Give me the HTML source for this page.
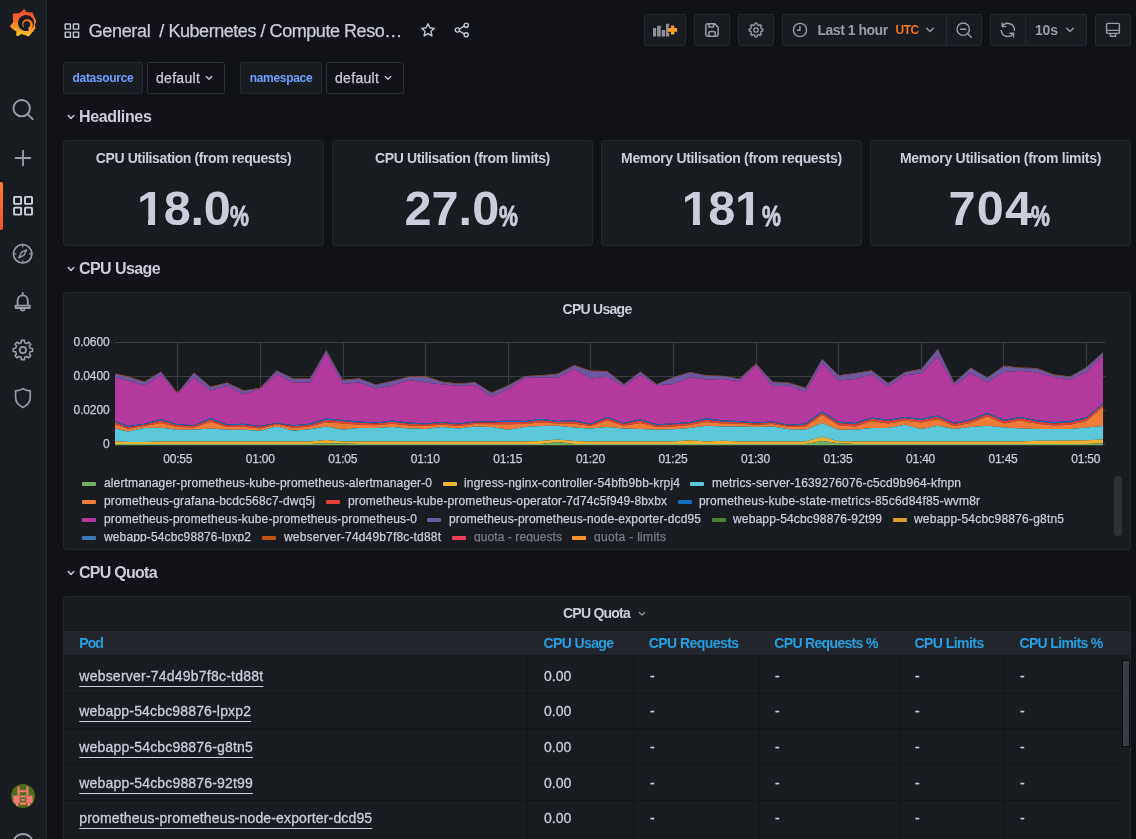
<!DOCTYPE html>
<html lang="en">
<head>
<meta charset="utf-8">
<title>Kubernetes / Compute Resources / Namespace (Pods) - Grafana</title>
<style>
*{box-sizing:border-box;margin:0;padding:0}
html,body{width:1136px;height:839px;overflow:hidden;background:#111217;color:#ccccdc;
  font-family:"Liberation Sans","DejaVu Sans",sans-serif;font-size:14px;-webkit-font-smoothing:antialiased}
.abs{position:absolute}
#side{position:absolute;left:0;top:0;width:47px;height:839px;background:#181b1f;border-right:1px solid #24272c}
#side svg{position:absolute}
.sicon{stroke:#9a9ba6;fill:none;stroke-width:1.9;stroke-linecap:round;stroke-linejoin:round}
#active{position:absolute;left:0;top:182px;width:3px;height:48px;border-radius:0 2px 2px 0;background:linear-gradient(#ff7b30,#f4502e)}
.tbtn{position:absolute;top:14px;height:32px;background:#181b1f;border:1px solid #25282e;border-radius:2px}
.tbtn svg{position:absolute}
.ticon{stroke:#9a9ba6;fill:none;stroke-width:1.7;stroke-linecap:round;stroke-linejoin:round}
.title{-webkit-text-stroke:0.25px #ccccdc;position:absolute;top:20px;font-size:18px;line-height:22px;color:#ccccdc;white-space:nowrap}
.var-label{position:absolute;top:62px;height:32px;background:#181b1f;border:1px solid #25282e;border-radius:2px;color:#6e9fff;font-size:12px;font-weight:700;line-height:30px;text-align:center}
.var-val{-webkit-text-stroke:0.25px #ccccdc;position:absolute;top:62px;height:32px;background:#111217;border:1px solid #2c2f35;border-radius:2px;color:#ccccdc;font-size:14px;line-height:30px;padding-left:8px}
.rowt{position:absolute;left:79px;font-size:16px;font-weight:700;line-height:30px;color:#ccccdc;white-space:nowrap}
.chev{position:absolute;stroke:#ccccdc;fill:none;stroke-width:1.4;stroke-linecap:round;stroke-linejoin:round}
.panel{position:absolute;background:#181b1f;border:1px solid #23262b;border-radius:3px;overflow:hidden}
.ptitle{position:absolute;left:0;right:0;top:1px;height:32px;line-height:32px;text-align:center;font-size:14px;font-weight:700;color:#ccccdc;white-space:nowrap}
.stat{position:absolute;left:0;right:0;top:38px;text-align:center;font-weight:700;color:#ccccdc;white-space:nowrap;line-height:60px}
.sn{position:absolute;top:37.4px;font-size:48.6px;line-height:60px;font-weight:700;color:#ccccdc;white-space:nowrap}
.su{-webkit-text-stroke:0.8px #ccccdc;position:absolute;top:44.5px;font-size:29.5px;line-height:60px;font-weight:700;color:#ccccdc;display:inline-block;transform:scaleX(0.72);transform-origin:0 50%}
.stat .n{font-size:49px;letter-spacing:-0.5px}
.stat .u{font-size:29px;margin-left:1px}
</style>
</head>
<body><div id="root" style="position:absolute;left:0;top:0;width:1136px;height:839px;overflow:hidden;will-change:transform">
<style>
.lg{-webkit-text-stroke:0.25px currentColor;font-size:12px;line-height:17px;color:#ccccdc;white-space:nowrap}
.th{font-size:14px;font-weight:700;line-height:24px;color:#23a0e3;white-space:nowrap}
.td{-webkit-text-stroke:0.3px #ccccdc;font-size:14px;line-height:17px;color:#ccccdc;white-space:nowrap}
.lk{text-decoration:underline;text-underline-offset:4.6px;text-decoration-thickness:1px}
.tr{left:0;width:1058px;height:1.3px;background:#131519}
</style>
<!-- ============ SIDEBAR ============ -->
<div id="side">
  <!-- grafana logo -->
  <svg style="left:9px;top:8px" width="28" height="30" viewBox="0 0 28 30">
    <defs><linearGradient id="gl" gradientUnits="userSpaceOnUse" x1="0" y1="1" x2="0" y2="29"><stop offset="0" stop-color="#f24a2b"/><stop offset="0.3" stop-color="#f3602b"/><stop offset="0.65" stop-color="#f9952a"/><stop offset="1" stop-color="#fbc726"/></linearGradient></defs>
    <path fill="url(#gl)" d="M15.12 0.89 L17.15 3.79 L20.55 4.51 L23.49 4.15 L24.72 7.78 L26.44 10.95 L27.25 13.89 L26.66 14.80 L25.99 16.38 L26.35 20.68 L23.72 22.72 L22.36 25.44 L19.64 28.38 L16.47 27.25 L12.40 26.12 L8.87 28.25 L7.05 27.25 L7.51 23.40 L3.79 21.14 L0.85 18.19 L4.25 14.12 L3.79 9.59 L4.02 5.60 L9.68 5.28 L12.63 3.47Z"/>
    <path fill="#181b1f" d="M24.95 15.70 L24.72 17.08 L24.25 18.38 L23.58 19.56 L22.73 20.59 L21.73 21.46 L20.62 22.14 L19.42 22.63 L18.17 22.92 L16.90 23.00 L15.63 22.88 L14.40 22.56 L13.23 22.05 L12.15 21.36 L11.19 20.49 L10.37 19.47 L9.73 18.31 L9.28 17.04 L9.05 15.70 L9.06 14.32 L9.31 12.94 L9.81 11.61 L10.55 10.37 L11.51 9.28 L12.67 8.37 L13.98 7.69 L15.41 7.26 L16.90 7.10 L18.39 7.22 L19.84 7.62 L21.18 8.28 L22.37 9.18 L23.37 10.27 L24.14 11.52 L24.67 12.87 L24.94 14.28Z"/>
    <path fill="url(#gl)" d="M15.33 18.87 L15.05 18.55 L14.81 18.20 L14.61 17.83 L14.47 17.43 L14.37 17.01 L14.33 16.59 L14.34 16.16 L14.41 15.74 L14.53 15.33 L14.70 14.94 L14.91 14.57 L15.18 14.23 L15.48 13.93 L15.82 13.66 L16.19 13.45 L16.59 13.28 L17.00 13.16 L17.43 13.09 L17.86 13.08 L18.29 13.13 L18.72 13.23 L19.12 13.38 L19.51 13.58 L19.86 13.83 L20.19 14.12 L20.47 14.45 L20.71 14.81 L20.90 15.21 L21.04 15.62 L21.13 16.05 L21.17 16.48 L21.14 16.92 L21.07 17.36 L20.94 17.77 L20.75 18.17 L20.52 18.55 L20.24 18.89 L19.92 19.19 L19.57 19.46 L19.18 19.67 L20.78 24.96 L25.36 22.93 L22.38 20.91 L22.86 20.25 L23.24 19.54 L23.52 18.79 L23.71 18.03 L23.80 17.25 L23.79 16.47 L23.68 15.71 L23.47 14.98 L23.18 14.29 L22.80 13.64 L22.35 13.06 L21.84 12.54 L21.27 12.10 L20.65 11.73 L20.00 11.46 L19.33 11.27 L18.64 11.16 L17.96 11.15 L17.28 11.23 L16.64 11.38 L16.02 11.62 L15.45 11.93 L14.93 12.31 L14.46 12.74 L14.07 13.23 L13.74 13.75 L13.49 14.31 L13.32 14.88 L13.22 15.47 L13.20 16.05 L13.26 16.62 L13.39 17.16 L13.59 17.68 L13.85 18.15 L14.17 18.58 L14.55 18.94 L14.98 19.22Z"/>
  </svg>
  <!-- search -->
  <svg style="left:11px;top:97px" width="24" height="24" viewBox="0 0 24 24"><circle class="sicon" cx="10.7" cy="11.2" r="8.2"/><path class="sicon" d="M16.8 17.4 L21.6 22"/></svg>
  <!-- plus -->
  <svg style="left:11px;top:146px" width="24" height="24" viewBox="0 0 24 24"><path class="sicon" d="M12 4.6 V19.4 M4.6 12 H19.4"/></svg>
  <div id="active"></div>
  <!-- dashboards (active) -->
  <svg style="left:11px;top:194px" width="24" height="24" viewBox="0 0 24 24"><g class="sicon" style="stroke:#d0d1de;stroke-width:1.9"><rect x="3.1" y="2.9" width="7" height="7" rx=".6"/><rect x="14.0" y="2.9" width="7" height="7" rx=".6"/><rect x="3.1" y="13.6" width="7" height="7" rx=".6"/><rect x="14.0" y="13.6" width="7" height="7" rx=".6"/></g></svg>
  <!-- compass -->
  <svg style="left:11px;top:242px" width="24" height="24" viewBox="0 0 24 24"><circle class="sicon" cx="11.7" cy="11.8" r="9.2" style="stroke-width:1.7"/><path class="sicon" style="stroke-width:1.4" d="M15.6 7.8 L13 13.2 L7.8 15.8 L10.4 10.4 Z"/><path class="sicon" style="stroke-width:1.2" d="M11.7 3.6v1.4M11.7 18.6v1.4M3.5 11.8h1.4M18.5 11.8h1.4"/></svg>
  <!-- bell -->
  <svg style="left:11px;top:290px" width="24" height="24" viewBox="0 0 24 24"><path class="sicon" d="M6.6 15.4 V10.8 C6.6 7.8 8.8 5.4 11.7 5.4 C14.6 5.4 16.8 7.8 16.8 10.8 V15.4 M4.6 15.6 H18.8 M4.6 18 H18.8 M4.6 15.6 V18 M18.8 15.6 V18 M9.9 19.6 C10.3 21 13.1 21 13.5 19.6 M11.7 3 V5"/></svg>
  <!-- gear -->
  <svg style="left:11px;top:338px" width="24" height="24" viewBox="-12 -12 24 24"><g transform="translate(-0.1,0)"><path class="sicon" style="stroke-width:1.6" d="M7.3 -1.75 L9.6 -1.55 L9.6 1.55 L7.3 1.75 L6.4 3.95 L7.9 5.7 L5.7 7.9 L3.95 6.4 L1.75 7.3 L1.55 9.6 L-1.55 9.6 L-1.75 7.3 L-3.95 6.4 L-5.7 7.9 L-7.9 5.7 L-6.4 3.95 L-7.3 1.75 L-9.6 1.55 L-9.6 -1.55 L-7.3 -1.75 L-6.4 -3.95 L-7.9 -5.7 L-5.7 -7.9 L-3.95 -6.4 L-1.75 -7.3 L-1.55 -9.6 L1.55 -9.6 L1.75 -7.3 L3.95 -6.4 L5.7 -7.9 L7.9 -5.7 L6.4 -3.95Z"/><circle class="sicon" style="stroke-width:1.7" cx="0" cy="0" r="3.2"/></g></svg>
  <!-- shield -->
  <svg style="left:11px;top:386px" width="24" height="24" viewBox="0 0 24 24"><path class="sicon" style="stroke-width:1.7" d="M11.9 2.6 C9.6 4.4 7 4.8 4.6 4.8 V11.6 C4.6 16.4 8 19.6 11.9 21.4 C15.8 19.6 19.2 16.4 19.2 11.6 V4.8 C16.8 4.8 14.2 4.4 11.9 2.6 Z"/></svg>
  <!-- avatar -->
  <svg style="left:11px;top:784px" width="24" height="24" viewBox="0 0 24 24">
    <defs><clipPath id="avc"><circle cx="12" cy="12" r="12"/></clipPath></defs>
    <g clip-path="url(#avc)"><rect width="24" height="24" fill="#4e6a1c"/>
    <g fill="#ff7a75"><rect x="6.5" y="2.6" width="2.2" height="8.8"/><rect x="15.3" y="2.6" width="2.2" height="8.8"/><rect x="8.7" y="6.2" width="6.6" height="2"/>
    <rect x="2.4" y="11.6" width="6.4" height="7.2"/><rect x="15.2" y="11.6" width="6.4" height="7.2"/><rect x="8.8" y="11.6" width="6.4" height="1.8"/><rect x="10" y="15" width="4" height="1.7"/><rect x="8.8" y="18.4" width="6.4" height="2.4"/><rect x="4.6" y="18.8" width="3" height="3"/><rect x="16.4" y="18.8" width="3" height="3"/><rect x="0" y="2.4" width="2" height="2"/><rect x="22" y="2.4" width="2" height="2"/></g></g>
  </svg>
  <!-- help (cut off) -->
  <svg style="left:11px;top:832px" width="24" height="24" viewBox="0 0 24 24"><circle class="sicon" cx="12" cy="12" r="10"/><circle cx="12" cy="7.6" r="1" fill="#9a9ba6"/></svg>
</div>

<!-- ============ TOP BAR ============ -->
<svg class="abs" style="left:63px;top:22px" width="18" height="18" viewBox="0 0 18 18"><g fill="none" stroke="#c7c8d6" stroke-width="1.45" stroke-linejoin="round"><rect x="2.2" y="1.9" width="5.2" height="5.2" rx=".5"/><rect x="10.4" y="1.9" width="5.2" height="5.2" rx=".5"/><rect x="2.2" y="10.1" width="5.2" height="5.2" rx=".5"/><rect x="10.4" y="10.1" width="5.2" height="5.2" rx=".5"/></g></svg>
<span class="title" id="t1" style="letter-spacing:-0.341px;left:88.7px">General</span><span class="title" id="t2" style="letter-spacing:-0.450px;left:159.3px">/ Kubernetes / Compute Reso…</span>
<!-- star -->
<svg class="abs" style="left:420px;top:22px" width="16" height="16" viewBox="0 0 18 18"><path fill="none" stroke="#c7c8d6" stroke-width="1.55" stroke-linejoin="round" d="M9 1.9 L11.1 6.5 L16 7.1 L12.4 10.5 L13.4 15.5 L9 13 L4.6 15.5 L5.6 10.5 L2 7.1 L6.9 6.5 Z"/></svg>
<!-- share -->
<svg class="abs" style="left:453px;top:21px" width="18" height="18" viewBox="0 0 18 18"><g fill="none" stroke="#c7c8d6" stroke-width="1.4"><circle cx="13.2" cy="4.2" r="2.1"/><circle cx="4.4" cy="9" r="2.1"/><circle cx="13.2" cy="13.8" r="2.1"/><path d="M6.3 8 L11.3 5.2 M6.3 10 L11.3 12.8"/></g></svg>
<!-- toolbar buttons -->
<div class="tbtn" style="left:644px;width:42px">
  <svg style="left:8px;top:6px" width="26" height="18" viewBox="0 0 26 18"><defs><linearGradient id="pg" x1="0" y1="0" x2="0" y2="1"><stop offset="0" stop-color="#f6862c"/><stop offset="1" stop-color="#fbb82a"/></linearGradient></defs><g fill="#8e8f9b"><rect x="-0.1" y="7.1" width="3.2" height="8.5" rx=".4"/><rect x="4.1" y="4.7" width="3.6" height="10.9" rx=".4"/><rect x="8.8" y="9.1" width="3.4" height="6.5" rx=".4"/><rect x="13" y="2.7" width="3.2" height="12.9" rx=".4"/></g><path d="M19.65 4.4 V13.5 M15.1 8.95 H24.2" stroke="#181b1f" stroke-width="5.4"/><path d="M19.65 4.5 V13.4 M15.2 8.95 H24.1" stroke="url(#pg)" stroke-width="3.3"/><rect x="15.2" y="7.3" width="8.9" height="3.3" fill="#f99f2b"/></svg>
</div>
<div class="tbtn" style="left:694px;width:36px">
  <svg style="left:8px;top:6px" width="18" height="18" viewBox="0.8 0.9 16.4 16.4"><path class="ticon" style="stroke-width:1.4" d="M5 3.5 H11.4 L14.6 6.7 V13.3 C14.6 14.1 14 14.7 13.2 14.7 H4.8 C4 14.7 3.4 14.1 3.4 13.3 V5 C3.4 4.1 4.1 3.5 5 3.5 Z M6.2 3.7 V6.3 H10.4 V3.7 M6.2 14.5 V11.5 C6.2 10.9 6.6 10.5 7.2 10.5 H10.9 C11.5 10.5 11.9 10.9 11.9 11.5 V14.5"/></svg>
</div>
<div class="tbtn" style="left:738px;width:36px">
  <svg style="left:8px;top:6px" width="18" height="18" viewBox="-9.55 -9.55 19.1 19.1"><path class="ticon" style="stroke-width:1.4" d="M5.5 -1.3 L7.2 -1.15 L7.2 1.15 L5.5 1.3 L4.8 2.95 L5.9 4.3 L4.3 5.9 L2.95 4.8 L1.3 5.5 L1.15 7.2 L-1.15 7.2 L-1.3 5.5 L-2.95 4.8 L-4.3 5.9 L-5.9 4.3 L-4.8 2.95 L-5.5 1.3 L-7.2 1.15 L-7.2 -1.15 L-5.5 -1.3 L-4.8 -2.95 L-5.9 -4.3 L-4.3 -5.9 L-2.95 -4.8 L-1.3 -5.5 L-1.15 -7.2 L1.15 -7.2 L1.3 -5.5 L2.95 -4.8 L4.3 -5.9 L5.9 -4.3 L4.8 -2.95Z"/><circle class="ticon" style="stroke-width:1.4" cx="0" cy="0" r="2.3"/></svg>
</div>
<div class="tbtn" style="left:782px;width:200px">
  <svg style="left:9px;top:7px" width="16" height="16" viewBox="0 0 16 16"><circle class="ticon" style="stroke-width:1.4" cx="8" cy="8" r="6.6"/><path class="ticon" style="stroke-width:1.4" d="M8 4.4 V8.2 H5.4"/></svg>
  <span class="abs" id="tr" style="letter-spacing:-0.487px;left:34.5px;top:0;line-height:30px;font-size:14px;font-weight:700;color:#9a9ba7;white-space:nowrap">Last 1 hour</span>
  <span class="abs" id="utc" style="letter-spacing:-0.536px;left:112.5px;top:0;line-height:30px;font-size:12px;font-weight:700;color:#f0731e;white-space:nowrap">UTC</span>
  <svg style="left:142px;top:11px" width="10" height="8" viewBox="0 0 10 8"><path class="ticon" style="stroke-width:1.4" d="M1.8 2.2 L5 5.4 L8.2 2.2"/></svg>
  <div class="abs" style="left:163px;top:0;width:1px;height:30px;background:#25282e"></div>
  <svg style="left:172px;top:6px" width="18" height="18" viewBox="0 0 18 18"><circle class="ticon" style="stroke-width:1.4" cx="8.2" cy="8.2" r="6.2"/><path class="ticon" style="stroke-width:1.4" d="M12.8 12.8 L16.2 16.2 M5.6 8.2 H10.8"/></svg>
</div>
<div class="tbtn" style="left:990px;width:97px">
  <svg style="left:8px;top:6px" width="18" height="18" viewBox="0 0 18 18"><path class="ticon" style="stroke-width:1.4" d="M3.4 5.2 A6.6 6.6 0 0 1 15.4 9.3 M3.1 1.9 V5.6 H6.8 M2.2 9.5 A6.6 6.6 0 0 0 14.2 12.6 M14.6 16 V12.3 H10.9"/></svg>
  <div class="abs" style="left:34px;top:0;width:1px;height:30px;background:#25282e"></div>
  <span class="abs" id="ivl" style="letter-spacing:-0.180px;left:44px;top:0;line-height:30px;font-size:14px;font-weight:700;color:#9a9ba7;white-space:nowrap">10s</span>
  <svg style="left:74px;top:11px" width="10" height="8" viewBox="0 0 10 8"><path class="ticon" style="stroke-width:1.4" d="M1.8 2.2 L5 5.4 L8.2 2.2"/></svg>
</div>
<div class="tbtn" style="left:1095px;width:36px">
  <svg style="left:8px;top:6px" width="18" height="18" viewBox="0 0 18 18"><path class="ticon" style="stroke-width:1.4" d="M3.6 2.4 H14.4 C15 2.4 15.4 2.8 15.4 3.4 V11.4 C15.4 12 15 12.4 14.4 12.4 H3.6 C3 12.4 2.6 12 2.6 11.4 V3.4 C2.6 2.8 3 2.4 3.6 2.4 Z M2.8 9.4 H15.2 M6.4 12.6 V15.2 H11.6 V12.6"/></svg>
</div>

<!-- variables -->
<div class="var-label" style="left:63px;width:80px"><span id="vl1" style="letter-spacing:-0.315px">datasource</span></div>
<div class="var-val" style="left:147px;width:78px"><span id="vv1" style="letter-spacing:0.292px">default</span><svg class="abs" style="left:56px;top:11px" width="10" height="8" viewBox="0 0 10 8"><path class="chev" style="position:static;stroke-width:1.3" d="M2.2 2.4 L5 5.2 L7.8 2.4"/></svg></div>
<div class="var-label" style="left:240px;width:82px"><span id="vl2" style="letter-spacing:-0.309px">namespace</span></div>
<div class="var-val" style="left:326px;width:78px"><span id="vv2" style="letter-spacing:0.309px">default</span><svg class="abs" style="left:56px;top:11px" width="10" height="8" viewBox="0 0 10 8"><path class="chev" style="position:static;stroke-width:1.3" d="M2.2 2.4 L5 5.2 L7.8 2.4"/></svg></div>

<!-- row: Headlines -->
<svg class="abs" style="left:66px;top:112px" width="10" height="10" viewBox="0 0 10 10"><path class="chev" style="position:static" d="M2.2 3.6 L5 6.4 L7.8 3.6"/></svg>
<div class="rowt" id="r1" style="letter-spacing:-0.349px;top:102px">Headlines</div>

<!-- stat panels -->
<div class="panel" style="left:63px;top:140px;width:261px;height:106px"><div class="ptitle"><span id="p1t" style="letter-spacing:-0.397px">CPU Utilisation (from requests)</span></div><span class="sn" id="s1n" style="letter-spacing:-0.226px;left:73.0px">18.0</span><i class="abs" style="left:74px;top:79px;width:10px;height:6.5px;background:#181b1f"></i><i class="abs" style="left:91px;top:79px;width:10.5px;height:6.5px;background:#181b1f"></i><span class="su" id="s1u" style="left:165.7px">%</span></div>
<div class="panel" style="left:332px;top:140px;width:261px;height:106px"><div class="ptitle"><span id="p2t" style="letter-spacing:-0.382px">CPU Utilisation (from limits)</span></div><span class="sn" id="s2n" style="letter-spacing:0.074px;left:71.4px">27.0</span><span class="su" id="s2u" style="left:166.3px">%</span></div>
<div class="panel" style="left:601px;top:140px;width:261px;height:106px"><div class="ptitle"><span id="p3t" style="letter-spacing:-0.322px">Memory Utilisation (from requests)</span></div><span class="sn" id="s3n" style="letter-spacing:-0.339px;left:79.7px">181</span><i class="abs" style="left:81px;top:79px;width:10px;height:6.5px;background:#181b1f"></i><i class="abs" style="left:98px;top:79px;width:9.5px;height:6.5px;background:#181b1f"></i><i class="abs" style="left:134px;top:79px;width:10px;height:6.5px;background:#181b1f"></i><i class="abs" style="left:151px;top:79px;width:9px;height:6.5px;background:#181b1f"></i><span class="su" id="s3u" style="left:159.6px">%</span></div>
<div class="panel" style="left:870px;top:140px;width:261px;height:106px"><div class="ptitle"><span id="p4t" style="letter-spacing:-0.278px">Memory Utilisation (from limits)</span></div><span class="sn" id="s4n" style="letter-spacing:1.261px;left:77.4px">704</span><span class="su" id="s4u" style="left:159.7px">%</span></div>

<!-- row: CPU Usage -->
<svg class="abs" style="left:66px;top:264px" width="10" height="10" viewBox="0 0 10 10"><path class="chev" style="position:static" d="M2.2 3.6 L5 6.4 L7.8 3.6"/></svg>
<div class="rowt" id="r2" style="letter-spacing:-0.581px;top:254px">CPU Usage</div>
<div class="panel" style="left:63px;top:292px;width:1068px;height:258px">
<div class="ptitle" style="top:0px"><span id="cut" style="letter-spacing:-0.721px">CPU Usage</span></div>
<svg class="abs" style="left:-1px;top:-1px" width="1066" height="258" viewBox="63 292 1066 258">
<defs><clipPath id="plot"><rect x="115" y="338" width="988.2" height="107.6"/></clipPath></defs>
<g stroke="#393c41" stroke-width="1" shape-rendering="crispEdges">
<path d="M115 342.5 H1105.5"/>
<path d="M115 376.5 H1105.5"/>
<path d="M115 410.5 H1105.5"/>
<path d="M115 444.5 H1105.5"/>
<path d="M177.5 342 V445"/>
<path d="M260.5 342 V445"/>
<path d="M343.5 342 V445"/>
<path d="M425.5 342 V445"/>
<path d="M508.5 342 V445"/>
<path d="M590.5 342 V445"/>
<path d="M673.5 342 V445"/>
<path d="M756.5 342 V445"/>
<path d="M838.5 342 V445"/>
<path d="M921.5 342 V445"/>
<path d="M1003.5 342 V445"/>
<path d="M1086.5 342 V445"/>
</g>
<g clip-path="url(#plot)">
<path fill="#c25413" d="M111.4 372.8 L127.9 376.3 L144.4 381.6 L161.0 371.5 L177.5 392.6 L194.0 372.5 L210.6 386.6 L227.1 382.5 L243.6 390.3 L260.1 387.8 L276.7 370.2 L293.2 378.4 L309.7 378.4 L326.3 350.0 L342.8 379.8 L359.3 378.2 L375.8 384.4 L392.4 380.7 L408.9 376.6 L425.4 376.1 L441.9 381.6 L458.5 383.4 L475.0 382.1 L491.5 392.6 L508.1 385.3 L524.6 375.9 L541.1 375.2 L557.6 373.6 L574.2 364.9 L590.7 370.6 L607.2 371.1 L623.8 383.9 L640.3 371.5 L656.8 383.9 L673.3 377.0 L689.9 372.0 L706.4 375.2 L722.9 375.7 L739.5 378.4 L756.0 363.3 L772.5 381.6 L789.0 382.5 L805.6 387.8 L822.1 358.7 L838.6 375.2 L855.1 372.9 L871.7 370.2 L888.2 383.0 L904.7 372.0 L921.3 368.8 L937.8 348.7 L954.3 382.5 L970.8 367.4 L987.4 377.5 L1003.9 365.6 L1020.4 367.4 L1037.0 367.9 L1053.5 374.3 L1070.0 376.6 L1086.5 367.0 L1103.1 351.9 L1103.1 352.4 L1086.5 367.5 L1070.0 377.1 L1053.5 374.9 L1037.0 368.5 L1020.4 368.0 L1003.9 366.2 L987.4 378.1 L970.8 368.0 L954.3 383.1 L937.8 349.2 L921.3 369.4 L904.7 372.6 L888.2 383.6 L871.7 370.7 L855.1 373.5 L838.6 375.8 L822.1 359.3 L805.6 388.4 L789.0 383.1 L772.5 382.2 L756.0 363.9 L739.5 379.0 L722.9 376.2 L706.4 375.8 L689.9 372.6 L673.3 377.6 L656.8 384.5 L640.3 372.1 L623.8 384.5 L607.2 371.7 L590.7 371.2 L574.2 365.5 L557.6 374.2 L541.1 375.8 L524.6 376.5 L508.1 385.8 L491.5 393.2 L475.0 382.6 L458.5 384.0 L441.9 382.2 L425.4 376.7 L408.9 377.1 L392.4 381.3 L375.8 384.9 L359.3 378.8 L342.8 380.4 L326.3 350.6 L309.7 379.0 L293.2 379.0 L276.7 370.7 L260.1 388.4 L243.6 390.9 L227.1 383.1 L210.6 387.2 L194.0 373.0 L177.5 393.2 L161.0 372.1 L144.4 382.2 L127.9 376.9 L111.4 373.4Z"/>
<path fill="#6c58a0" d="M111.4 373.4 L127.9 376.9 L144.4 382.2 L161.0 372.1 L177.5 393.2 L194.0 373.0 L210.6 387.2 L227.1 383.1 L243.6 390.9 L260.1 388.4 L276.7 370.7 L293.2 379.0 L309.7 379.0 L326.3 350.6 L342.8 380.4 L359.3 378.8 L375.8 384.9 L392.4 381.3 L408.9 377.1 L425.4 376.7 L441.9 382.2 L458.5 384.0 L475.0 382.6 L491.5 393.2 L508.1 385.8 L524.6 376.5 L541.1 375.8 L557.6 374.2 L574.2 365.5 L590.7 371.2 L607.2 371.7 L623.8 384.5 L640.3 372.1 L656.8 384.5 L673.3 377.6 L689.9 372.6 L706.4 375.8 L722.9 376.2 L739.5 379.0 L756.0 363.9 L772.5 382.2 L789.0 383.1 L805.6 388.4 L822.1 359.3 L838.6 375.8 L855.1 373.5 L871.7 370.7 L888.2 383.6 L904.7 372.6 L921.3 369.4 L937.8 349.2 L954.3 383.1 L970.8 368.0 L987.4 378.1 L1003.9 366.2 L1020.4 368.0 L1037.0 368.5 L1053.5 374.9 L1070.0 377.1 L1086.5 367.5 L1103.1 352.4 L1103.1 355.6 L1086.5 372.1 L1070.0 379.4 L1053.5 377.1 L1037.0 372.6 L1020.4 370.7 L1003.9 372.1 L987.4 382.6 L970.8 373.0 L954.3 385.4 L937.8 356.5 L921.3 373.5 L904.7 375.3 L888.2 386.8 L871.7 374.4 L855.1 379.0 L838.6 380.4 L822.1 363.0 L805.6 391.8 L789.0 385.8 L772.5 386.3 L756.0 365.2 L739.5 381.3 L722.9 379.0 L706.4 379.4 L689.9 377.6 L673.3 384.0 L656.8 385.2 L640.3 374.9 L623.8 386.3 L607.2 376.7 L590.7 378.5 L574.2 368.9 L557.6 377.6 L541.1 377.6 L524.6 378.1 L508.1 389.0 L491.5 396.8 L475.0 384.9 L458.5 385.8 L441.9 384.5 L425.4 382.6 L408.9 379.9 L392.4 385.8 L375.8 388.6 L359.3 382.6 L342.8 384.0 L326.3 352.9 L309.7 382.6 L293.2 382.6 L276.7 373.9 L260.1 389.0 L243.6 394.5 L227.1 385.4 L210.6 390.7 L194.0 377.4 L177.5 393.6 L161.0 375.1 L144.4 385.6 L127.9 380.4 L111.4 376.5Z"/>
<path fill="#b2399d" d="M111.4 376.5 L127.9 380.4 L144.4 385.6 L161.0 375.1 L177.5 393.6 L194.0 377.4 L210.6 390.7 L227.1 385.4 L243.6 394.5 L260.1 389.0 L276.7 373.9 L293.2 382.6 L309.7 382.6 L326.3 352.9 L342.8 384.0 L359.3 382.6 L375.8 388.6 L392.4 385.8 L408.9 379.9 L425.4 382.6 L441.9 384.5 L458.5 385.8 L475.0 384.9 L491.5 396.8 L508.1 389.0 L524.6 378.1 L541.1 377.6 L557.6 377.6 L574.2 368.9 L590.7 378.5 L607.2 376.7 L623.8 386.3 L640.3 374.9 L656.8 385.2 L673.3 384.0 L689.9 377.6 L706.4 379.4 L722.9 379.0 L739.5 381.3 L756.0 365.2 L772.5 386.3 L789.0 385.8 L805.6 391.8 L822.1 363.0 L838.6 380.4 L855.1 379.0 L871.7 374.4 L888.2 386.8 L904.7 375.3 L921.3 373.5 L937.8 356.5 L954.3 385.4 L970.8 373.0 L987.4 382.6 L1003.9 372.1 L1020.4 370.7 L1037.0 372.6 L1053.5 377.1 L1070.0 379.4 L1086.5 372.1 L1103.1 355.6 L1103.1 403.2 L1086.5 417.4 L1070.0 421.1 L1053.5 422.0 L1037.0 420.2 L1020.4 417.0 L1003.9 419.7 L987.4 412.9 L970.8 419.3 L954.3 422.9 L937.8 415.6 L921.3 418.8 L904.7 417.0 L888.2 419.7 L871.7 417.4 L855.1 422.9 L838.6 421.5 L822.1 411.5 L805.6 423.4 L789.0 424.8 L772.5 421.5 L756.0 422.5 L739.5 421.1 L722.9 420.6 L706.4 418.3 L689.9 422.0 L673.3 423.4 L656.8 424.3 L640.3 419.3 L623.8 422.9 L607.2 417.0 L590.7 423.8 L574.2 420.2 L557.6 421.1 L541.1 418.8 L524.6 421.1 L508.1 420.6 L491.5 421.5 L475.0 421.5 L458.5 423.4 L441.9 422.0 L425.4 423.4 L408.9 422.5 L392.4 420.4 L375.8 422.5 L359.3 421.5 L342.8 419.9 L326.3 418.6 L309.7 423.8 L293.2 425.2 L276.7 422.7 L260.1 426.1 L243.6 423.8 L227.1 424.3 L210.6 418.1 L194.0 425.2 L177.5 424.1 L161.0 419.3 L144.4 423.8 L127.9 426.1 L111.4 419.7Z"/>
<path fill="#1770be" d="M111.4 419.7 L127.9 426.1 L144.4 423.8 L161.0 419.3 L177.5 424.1 L194.0 425.2 L210.6 418.1 L227.1 424.3 L243.6 423.8 L260.1 426.1 L276.7 422.7 L293.2 425.2 L309.7 423.8 L326.3 418.6 L342.8 419.9 L359.3 421.5 L375.8 422.5 L392.4 420.4 L408.9 422.5 L425.4 423.4 L441.9 422.0 L458.5 423.4 L475.0 421.5 L491.5 421.5 L508.1 420.6 L524.6 421.1 L541.1 418.8 L557.6 421.1 L574.2 420.2 L590.7 423.8 L607.2 417.0 L623.8 422.9 L640.3 419.3 L656.8 424.3 L673.3 423.4 L689.9 422.0 L706.4 418.3 L722.9 420.6 L739.5 421.1 L756.0 422.5 L772.5 421.5 L789.0 424.8 L805.6 423.4 L822.1 411.5 L838.6 421.5 L855.1 422.9 L871.7 417.4 L888.2 419.7 L904.7 417.0 L921.3 418.8 L937.8 415.6 L954.3 422.9 L970.8 419.3 L987.4 412.9 L1003.9 419.7 L1020.4 417.0 L1037.0 420.2 L1053.5 422.0 L1070.0 421.1 L1086.5 417.4 L1103.1 403.2 L1103.1 404.6 L1086.5 418.8 L1070.0 422.5 L1053.5 423.4 L1037.0 421.5 L1020.4 418.3 L1003.9 421.1 L987.4 414.2 L970.8 420.6 L954.3 424.1 L937.8 417.0 L921.3 420.2 L904.7 418.3 L888.2 421.1 L871.7 418.8 L855.1 424.3 L838.6 422.9 L822.1 412.9 L805.6 424.7 L789.0 425.7 L772.5 422.6 L756.0 423.4 L739.5 422.2 L722.9 421.8 L706.4 419.7 L689.9 423.2 L673.3 424.6 L656.8 425.4 L640.3 420.6 L623.8 424.0 L607.2 418.3 L590.7 424.8 L574.2 421.5 L557.6 422.0 L541.1 420.2 L524.6 422.3 L508.1 422.0 L491.5 422.6 L475.0 422.6 L458.5 424.4 L441.9 423.0 L425.4 424.5 L408.9 423.7 L392.4 421.7 L375.8 423.6 L359.3 422.8 L342.8 421.3 L326.3 419.9 L309.7 424.9 L293.2 426.3 L276.7 423.5 L260.1 427.0 L243.6 425.0 L227.1 425.4 L210.6 419.5 L194.0 426.1 L177.5 425.2 L161.0 420.6 L144.4 424.7 L127.9 427.2 L111.4 421.0Z"/>
<path fill="#e24137" d="M111.4 421.0 L127.9 427.2 L144.4 424.7 L161.0 420.6 L177.5 425.2 L194.0 426.1 L210.6 419.5 L227.1 425.4 L243.6 425.0 L260.1 427.0 L276.7 423.5 L293.2 426.3 L309.7 424.9 L326.3 419.9 L342.8 421.3 L359.3 422.8 L375.8 423.6 L392.4 421.7 L408.9 423.7 L425.4 424.5 L441.9 423.0 L458.5 424.4 L475.0 422.6 L491.5 422.6 L508.1 422.0 L524.6 422.3 L541.1 420.2 L557.6 422.0 L574.2 421.5 L590.7 424.8 L607.2 418.3 L623.8 424.0 L640.3 420.6 L656.8 425.4 L673.3 424.6 L689.9 423.2 L706.4 419.7 L722.9 421.8 L739.5 422.2 L756.0 423.4 L772.5 422.6 L789.0 425.7 L805.6 424.7 L822.1 412.9 L838.6 422.9 L855.1 424.3 L871.7 418.8 L888.2 421.1 L904.7 418.3 L921.3 420.2 L937.8 417.0 L954.3 424.1 L970.8 420.6 L987.4 414.2 L1003.9 421.1 L1020.4 418.3 L1037.0 421.5 L1053.5 423.4 L1070.0 422.5 L1086.5 418.8 L1103.1 404.6 L1103.1 406.9 L1086.5 421.1 L1070.0 424.8 L1053.5 425.4 L1037.0 423.8 L1020.4 420.6 L1003.9 423.4 L987.4 416.5 L970.8 422.9 L954.3 425.9 L937.8 419.3 L921.3 422.5 L904.7 420.6 L888.2 423.4 L871.7 421.1 L855.1 426.4 L838.6 425.2 L822.1 415.1 L805.6 426.6 L789.0 427.0 L772.5 424.1 L756.0 424.8 L739.5 423.8 L722.9 423.6 L706.4 421.9 L689.9 425.0 L673.3 426.4 L656.8 427.0 L640.3 422.9 L623.8 425.7 L607.2 420.6 L590.7 426.1 L574.2 423.7 L557.6 423.4 L541.1 422.4 L524.6 424.1 L508.1 424.3 L491.5 424.3 L475.0 424.1 L458.5 425.9 L441.9 424.5 L425.4 426.1 L408.9 425.4 L392.4 423.7 L375.8 425.2 L359.3 424.8 L342.8 423.6 L326.3 422.2 L309.7 426.6 L293.2 428.0 L276.7 424.6 L260.1 428.4 L243.6 426.8 L227.1 427.0 L210.6 421.8 L194.0 427.5 L177.5 426.9 L161.0 422.9 L144.4 425.9 L127.9 428.8 L111.4 423.3Z"/>
<path fill="#f07c38" d="M111.4 423.3 L127.9 428.8 L144.4 425.9 L161.0 422.9 L177.5 426.9 L194.0 427.5 L210.6 421.8 L227.1 427.0 L243.6 426.8 L260.1 428.4 L276.7 424.6 L293.2 428.0 L309.7 426.6 L326.3 422.2 L342.8 423.6 L359.3 424.8 L375.8 425.2 L392.4 423.7 L408.9 425.4 L425.4 426.1 L441.9 424.5 L458.5 425.9 L475.0 424.1 L491.5 424.3 L508.1 424.3 L524.6 424.1 L541.1 422.4 L557.6 423.4 L574.2 423.7 L590.7 426.1 L607.2 420.6 L623.8 425.7 L640.3 422.9 L656.8 427.0 L673.3 426.4 L689.9 425.0 L706.4 421.9 L722.9 423.6 L739.5 423.8 L756.0 424.8 L772.5 424.1 L789.0 427.0 L805.6 426.6 L822.1 415.1 L838.6 425.2 L855.1 426.4 L871.7 421.1 L888.2 423.4 L904.7 420.6 L921.3 422.5 L937.8 419.3 L954.3 425.9 L970.8 422.9 L987.4 416.5 L1003.9 423.4 L1020.4 420.6 L1037.0 423.8 L1053.5 425.4 L1070.0 424.8 L1086.5 421.1 L1103.1 406.9 L1103.1 426.1 L1086.5 427.5 L1070.0 428.9 L1053.5 428.9 L1037.0 428.9 L1020.4 428.4 L1003.9 427.5 L987.4 425.7 L970.8 427.0 L954.3 428.9 L937.8 425.7 L921.3 428.9 L904.7 424.8 L888.2 428.0 L871.7 428.0 L855.1 429.8 L838.6 429.8 L822.1 422.9 L805.6 429.8 L789.0 429.3 L772.5 426.6 L756.0 427.0 L739.5 426.6 L722.9 426.6 L706.4 425.7 L689.9 428.0 L673.3 429.3 L656.8 429.8 L640.3 428.9 L623.8 428.4 L607.2 427.0 L590.7 428.4 L574.2 427.5 L557.6 425.7 L541.1 426.1 L524.6 427.0 L508.1 429.8 L491.5 427.0 L475.0 426.6 L458.5 428.4 L441.9 427.0 L425.4 428.9 L408.9 428.4 L392.4 427.0 L375.8 428.0 L359.3 428.0 L342.8 429.8 L326.3 426.6 L309.7 429.3 L293.2 430.7 L276.7 426.6 L260.1 430.7 L243.6 429.8 L227.1 429.8 L210.6 428.6 L194.0 429.8 L177.5 429.8 L161.0 427.7 L144.4 428.0 L127.9 431.4 L111.4 427.6Z"/>
<path fill="#5ac8da" d="M111.4 427.6 L127.9 431.4 L144.4 428.0 L161.0 427.7 L177.5 429.8 L194.0 429.8 L210.6 428.6 L227.1 429.8 L243.6 429.8 L260.1 430.7 L276.7 426.6 L293.2 430.7 L309.7 429.3 L326.3 426.6 L342.8 429.8 L359.3 428.0 L375.8 428.0 L392.4 427.0 L408.9 428.4 L425.4 428.9 L441.9 427.0 L458.5 428.4 L475.0 426.6 L491.5 427.0 L508.1 429.8 L524.6 427.0 L541.1 426.1 L557.6 425.7 L574.2 427.5 L590.7 428.4 L607.2 427.0 L623.8 428.4 L640.3 428.9 L656.8 429.8 L673.3 429.3 L689.9 428.0 L706.4 425.7 L722.9 426.6 L739.5 426.6 L756.0 427.0 L772.5 426.6 L789.0 429.3 L805.6 429.8 L822.1 422.9 L838.6 429.8 L855.1 429.8 L871.7 428.0 L888.2 428.0 L904.7 424.8 L921.3 428.9 L937.8 425.7 L954.3 428.9 L970.8 427.0 L987.4 425.7 L1003.9 427.5 L1020.4 428.4 L1037.0 428.9 L1053.5 428.9 L1070.0 428.9 L1086.5 427.5 L1103.1 426.1 L1103.1 439.6 L1086.5 440.3 L1070.0 440.5 L1053.5 440.8 L1037.0 440.8 L1020.4 441.5 L1003.9 441.5 L987.4 441.5 L970.8 441.5 L954.3 441.5 L937.8 441.5 L921.3 441.5 L904.7 441.5 L888.2 441.5 L871.7 441.5 L855.1 441.5 L838.6 441.2 L822.1 436.7 L805.6 441.5 L789.0 441.5 L772.5 441.5 L756.0 441.5 L739.5 441.5 L722.9 440.8 L706.4 441.5 L689.9 440.3 L673.3 441.5 L656.8 441.5 L640.3 441.5 L623.8 441.5 L607.2 441.5 L590.7 441.5 L574.2 441.0 L557.6 439.4 L541.1 441.0 L524.6 441.5 L508.1 441.5 L491.5 441.5 L475.0 441.5 L458.5 441.5 L441.9 441.5 L425.4 441.5 L408.9 441.5 L392.4 441.5 L375.8 441.5 L359.3 441.5 L342.8 441.5 L326.3 439.9 L309.7 441.5 L293.2 441.5 L276.7 441.5 L260.1 441.5 L243.6 441.5 L227.1 441.5 L210.6 441.5 L194.0 441.5 L177.5 441.5 L161.0 441.5 L144.4 441.9 L127.9 441.9 L111.4 441.0Z"/>
<path fill="#ecb234" d="M111.4 441.0 L127.9 441.9 L144.4 441.9 L161.0 441.5 L177.5 441.5 L194.0 441.5 L210.6 441.5 L227.1 441.5 L243.6 441.5 L260.1 441.5 L276.7 441.5 L293.2 441.5 L309.7 441.5 L326.3 439.9 L342.8 441.5 L359.3 441.5 L375.8 441.5 L392.4 441.5 L408.9 441.5 L425.4 441.5 L441.9 441.5 L458.5 441.5 L475.0 441.5 L491.5 441.5 L508.1 441.5 L524.6 441.5 L541.1 441.0 L557.6 439.4 L574.2 441.0 L590.7 441.5 L607.2 441.5 L623.8 441.5 L640.3 441.5 L656.8 441.5 L673.3 441.5 L689.9 440.3 L706.4 441.5 L722.9 440.8 L739.5 441.5 L756.0 441.5 L772.5 441.5 L789.0 441.5 L805.6 441.5 L822.1 436.7 L838.6 441.2 L855.1 441.5 L871.7 441.5 L888.2 441.5 L904.7 441.5 L921.3 441.5 L937.8 441.5 L954.3 441.5 L970.8 441.5 L987.4 441.5 L1003.9 441.5 L1020.4 441.5 L1037.0 440.8 L1053.5 440.8 L1070.0 440.5 L1086.5 440.3 L1103.1 439.6 L1103.1 443.3 L1086.5 443.9 L1070.0 443.9 L1053.5 443.9 L1037.0 443.9 L1020.4 443.9 L1003.9 443.9 L987.4 443.9 L970.8 443.9 L954.3 443.9 L937.8 443.9 L921.3 443.9 L904.7 443.9 L888.2 443.9 L871.7 443.9 L855.1 443.9 L838.6 443.3 L822.1 441.0 L805.6 443.9 L789.0 443.9 L772.5 443.9 L756.0 443.9 L739.5 443.9 L722.9 443.9 L706.4 443.9 L689.9 443.9 L673.3 443.9 L656.8 443.9 L640.3 443.9 L623.8 443.9 L607.2 443.9 L590.7 443.9 L574.2 443.9 L557.6 441.9 L541.1 443.9 L524.6 443.9 L508.1 443.9 L491.5 443.9 L475.0 443.9 L458.5 443.9 L441.9 443.9 L425.4 443.9 L408.9 443.9 L392.4 443.9 L375.8 443.9 L359.3 443.9 L342.8 443.5 L326.3 443.3 L309.7 443.9 L293.2 443.9 L276.7 443.9 L260.1 443.9 L243.6 443.9 L227.1 443.9 L210.6 443.9 L194.0 443.9 L177.5 443.9 L161.0 443.9 L144.4 443.9 L127.9 443.9 L111.4 443.9Z"/>
<path fill="#73af64" d="M111.4 443.9 L127.9 443.9 L144.4 443.9 L161.0 443.9 L177.5 443.9 L194.0 443.9 L210.6 443.9 L227.1 443.9 L243.6 443.9 L260.1 443.9 L276.7 443.9 L293.2 443.9 L309.7 443.9 L326.3 443.3 L342.8 443.5 L359.3 443.9 L375.8 443.9 L392.4 443.9 L408.9 443.9 L425.4 443.9 L441.9 443.9 L458.5 443.9 L475.0 443.9 L491.5 443.9 L508.1 443.9 L524.6 443.9 L541.1 443.9 L557.6 441.9 L574.2 443.9 L590.7 443.9 L607.2 443.9 L623.8 443.9 L640.3 443.9 L656.8 443.9 L673.3 443.9 L689.9 443.9 L706.4 443.9 L722.9 443.9 L739.5 443.9 L756.0 443.9 L772.5 443.9 L789.0 443.9 L805.6 443.9 L822.1 441.0 L838.6 443.3 L855.1 443.9 L871.7 443.9 L888.2 443.9 L904.7 443.9 L921.3 443.9 L937.8 443.9 L954.3 443.9 L970.8 443.9 L987.4 443.9 L1003.9 443.9 L1020.4 443.9 L1037.0 443.9 L1053.5 443.9 L1070.0 443.9 L1086.5 443.9 L1103.1 443.3 L1103.1 445.5 L111.4 445.5Z"/>
</g>
<g font-family="Liberation Sans, sans-serif" font-size="12" fill="#ccccdc" stroke="#ccccdc" stroke-width="0.25" text-anchor="end">
<text x="109.6" y="345.8" textLength="36" lengthAdjust="spacing">0.0600</text>
<text x="109.6" y="379.8" textLength="36" lengthAdjust="spacing">0.0400</text>
<text x="109.6" y="413.8" textLength="36" lengthAdjust="spacing">0.0200</text>
<text x="109.6" y="447.8">0</text>
</g>
<g font-family="Liberation Sans, sans-serif" font-size="12" fill="#ccccdc" stroke="#ccccdc" stroke-width="0.25" text-anchor="middle">
<text x="177.8" y="462.8" textLength="29.2" lengthAdjust="spacing">00:55</text>
<text x="260.3" y="462.8" textLength="29.2" lengthAdjust="spacing">01:00</text>
<text x="342.9" y="462.8" textLength="29.2" lengthAdjust="spacing">01:05</text>
<text x="425.4" y="462.8" textLength="29.2" lengthAdjust="spacing">01:10</text>
<text x="507.9" y="462.8" textLength="29.2" lengthAdjust="spacing">01:15</text>
<text x="590.5" y="462.8" textLength="29.2" lengthAdjust="spacing">01:20</text>
<text x="673.0" y="462.8" textLength="29.2" lengthAdjust="spacing">01:25</text>
<text x="755.6" y="462.8" textLength="29.2" lengthAdjust="spacing">01:30</text>
<text x="838.1" y="462.8" textLength="29.2" lengthAdjust="spacing">01:35</text>
<text x="920.7" y="462.8" textLength="29.2" lengthAdjust="spacing">01:40</text>
<text x="1003.2" y="462.8" textLength="29.2" lengthAdjust="spacing">01:45</text>
<text x="1085.8" y="462.8" textLength="29.2" lengthAdjust="spacing">01:50</text>
</g>
</svg>

<div class="abs" id="legend" style="left:0;top:180px;width:1066px;height:69px;overflow:hidden">
<i class="abs" style="left:18px;top:8.9px;width:14px;height:4px;border-radius:1px;background:#73af64"></i>
<span class="abs lg" id="lg0" style="letter-spacing:0.135px;left:40px;top:1.9px;">alertmanager-prometheus-kube-prometheus-alertmanager-0</span>
<i class="abs" style="left:379px;top:8.9px;width:14px;height:4px;border-radius:1px;background:#ecb234"></i>
<span class="abs lg" id="lg1" style="letter-spacing:0.190px;left:400px;top:1.9px;">ingress-nginx-controller-54bfb9bb-krpj4</span>
<i class="abs" style="left:626px;top:8.9px;width:14px;height:4px;border-radius:1px;background:#5ac8da"></i>
<span class="abs lg" id="lg2" style="letter-spacing:0.155px;left:648px;top:1.9px;">metrics-server-1639276076-c5cd9b964-kfnpn</span>
<i class="abs" style="left:18px;top:26.9px;width:14px;height:4px;border-radius:1px;background:#f07c38"></i>
<span class="abs lg" id="lg3" style="letter-spacing:0.168px;left:40px;top:19.9px;">prometheus-grafana-bcdc568c7-dwq5j</span>
<i class="abs" style="left:262px;top:26.9px;width:14px;height:4px;border-radius:1px;background:#e24137"></i>
<span class="abs lg" id="lg4" style="letter-spacing:0.134px;left:284px;top:19.9px;">prometheus-kube-prometheus-operator-7d74c5f949-8bxbx</span>
<i class="abs" style="left:614px;top:26.9px;width:14px;height:4px;border-radius:1px;background:#1770be"></i>
<span class="abs lg" id="lg5" style="letter-spacing:0.198px;left:635px;top:19.9px;">prometheus-kube-state-metrics-85c6d84f85-wvm8r</span>
<i class="abs" style="left:18px;top:44.9px;width:14px;height:4px;border-radius:1px;background:#b2399d"></i>
<span class="abs lg" id="lg6" style="letter-spacing:0.140px;left:40px;top:37.9px;">prometheus-prometheus-kube-prometheus-prometheus-0</span>
<i class="abs" style="left:363px;top:44.9px;width:14px;height:4px;border-radius:1px;background:#6c58a0"></i>
<span class="abs lg" id="lg7" style="letter-spacing:0.146px;left:385px;top:37.9px;">prometheus-prometheus-node-exporter-dcd95</span>
<i class="abs" style="left:648px;top:44.9px;width:14px;height:4px;border-radius:1px;background:#4a8038"></i>
<span class="abs lg" id="lg8" style="letter-spacing:0.161px;left:669px;top:37.9px;">webapp-54cbc98876-92t99</span>
<i class="abs" style="left:829px;top:44.9px;width:14px;height:4px;border-radius:1px;background:#d0a21f"></i>
<span class="abs lg" id="lg9" style="letter-spacing:0.207px;left:850px;top:37.9px;">webapp-54cbc98876-g8tn5</span>
<i class="abs" style="left:18px;top:63.0px;width:14px;height:4px;border-radius:1px;background:#3c78b8"></i>
<span class="abs lg" id="lg10" style="letter-spacing:0.131px;left:40px;top:56.0px;">webapp-54cbc98876-lpxp2</span>
<i class="abs" style="left:198px;top:63.0px;width:14px;height:4px;border-radius:1px;background:#c25413"></i>
<span class="abs lg" id="lg11" style="letter-spacing:0.169px;left:220px;top:56.0px;">webserver-74d49b7f8c-td88t</span>
<i class="abs" style="left:388px;top:63.0px;width:14px;height:4px;border-radius:1px;background:#f23f55"></i>
<span class="abs lg" id="lg12" style="letter-spacing:0.085px;left:410px;top:56.0px;color:#7b7c88;">quota - requests</span>
<i class="abs" style="left:508px;top:63.0px;width:14px;height:4px;border-radius:1px;background:#ff9226"></i>
<span class="abs lg" id="lg13" style="letter-spacing:0.305px;left:530px;top:56.0px;color:#7b7c88;">quota - limits</span>
</div>
<div class="abs" style="left:1050.3px;top:183px;width:7.4px;height:59.5px;border-radius:3.7px;background:#2d2f35"></div>
</div>
<svg class="abs" style="left:66px;top:568px" width="10" height="10" viewBox="0 0 10 10"><path class="chev" style="position:static" d="M2.2 3.6 L5 6.4 L7.8 3.6"/></svg>
<div class="rowt" id="r3" style="letter-spacing:-0.732px;top:558px">CPU Quota</div>
<div class="panel" style="left:63px;top:596px;width:1068px;height:258px">
<div class="ptitle" style="top:-0.5px;padding-right:1px"><span id="cqt" style="letter-spacing:-0.774px">CPU Quota</span><svg class="abs" style="left:573px;top:12px" width="10" height="10" viewBox="0 0 10 10"><path class="chev" style="position:static;stroke:#a0a1ad;stroke-width:1.2" d="M2.2 3.4 L5 6.2 L7.8 3.4"/></svg></div>
<div class="abs" style="left:0;top:33px;width:1066px;height:26px;background:#22252b;border-top:1px solid #141619;border-bottom:1px solid #141619"></div>
<span class="abs th" id="th0" style="letter-spacing:-0.977px;left:15.3px;top:34.2px">Pod</span>
<span class="abs th" id="th1" style="letter-spacing:-0.609px;left:479.5px;top:34.2px">CPU Usage</span>
<span class="abs th" id="th2" style="letter-spacing:-0.561px;left:584.8px;top:34.2px">CPU Requests</span>
<span class="abs th" id="th3" style="letter-spacing:-0.670px;left:710.3px;top:34.2px">CPU Requests %</span>
<span class="abs th" id="th4" style="letter-spacing:-0.532px;left:850.4px;top:34.2px">CPU Limits</span>
<span class="abs th" id="th5" style="letter-spacing:-0.665px;left:955.5px;top:34.2px">CPU Limits %</span>
<div class="abs tr" style="top:95.75px"></div>
<span class="abs td lk" id="pd0" style="letter-spacing:0.223px;left:15.3px;top:70.80px">webserver-74d49b7f8c-td88t</span>
<span class="abs td" id="u0" style="letter-spacing:0.017px;left:480px;top:70.80px">0.00</span>
<span class="abs td" style="left:586px;top:70.80px">-</span>
<span class="abs td" style="left:711px;top:70.80px">-</span>
<span class="abs td" style="left:851px;top:70.80px">-</span>
<span class="abs td" style="left:956px;top:70.80px">-</span>
<div class="abs tr" style="top:131.45px"></div>
<span class="abs td lk" id="pd1" style="letter-spacing:0.162px;left:15.3px;top:106.40px">webapp-54cbc98876-lpxp2</span>
<span class="abs td" id="u1" style="letter-spacing:0.017px;left:480px;top:106.40px">0.00</span>
<span class="abs td" style="left:586px;top:106.40px">-</span>
<span class="abs td" style="left:711px;top:106.40px">-</span>
<span class="abs td" style="left:851px;top:106.40px">-</span>
<span class="abs td" style="left:956px;top:106.40px">-</span>
<div class="abs tr" style="top:167.15px"></div>
<span class="abs td lk" id="pd2" style="letter-spacing:0.173px;left:15.3px;top:142.00px">webapp-54cbc98876-g8tn5</span>
<span class="abs td" id="u2" style="letter-spacing:0.017px;left:480px;top:142.00px">0.00</span>
<span class="abs td" style="left:586px;top:142.00px">-</span>
<span class="abs td" style="left:711px;top:142.00px">-</span>
<span class="abs td" style="left:851px;top:142.00px">-</span>
<span class="abs td" style="left:956px;top:142.00px">-</span>
<div class="abs tr" style="top:202.85px"></div>
<span class="abs td lk" id="pd3" style="letter-spacing:0.173px;left:15.3px;top:177.60px">webapp-54cbc98876-92t99</span>
<span class="abs td" id="u3" style="letter-spacing:0.017px;left:480px;top:177.60px">0.00</span>
<span class="abs td" style="left:586px;top:177.60px">-</span>
<span class="abs td" style="left:711px;top:177.60px">-</span>
<span class="abs td" style="left:851px;top:177.60px">-</span>
<span class="abs td" style="left:956px;top:177.60px">-</span>
<div class="abs tr" style="top:238.55px"></div>
<span class="abs td lk" id="pd4" style="letter-spacing:0.141px;left:15.3px;top:213.20px">prometheus-prometheus-node-exporter-dcd95</span>
<span class="abs td" id="u4" style="letter-spacing:0.017px;left:480px;top:213.20px">0.00</span>
<span class="abs td" style="left:586px;top:213.20px">-</span>
<span class="abs td" style="left:711px;top:213.20px">-</span>
<span class="abs td" style="left:851px;top:213.20px">-</span>
<span class="abs td" style="left:956px;top:213.20px">-</span>
<div class="abs tr" style="top:274.25px"></div>
<span class="abs td lk" id="pd5" style="letter-spacing:-0.555px;left:15.3px;top:248.80px">prometheus-prometheus-kube-prometheus-prometheus-0</span>
<span class="abs td" id="u5" style="letter-spacing:0.017px;left:480px;top:248.80px">0.00</span>
<span class="abs td" style="left:586px;top:248.80px">-</span>
<span class="abs td" style="left:711px;top:248.80px">-</span>
<span class="abs td" style="left:851px;top:248.80px">-</span>
<span class="abs td" style="left:956px;top:248.80px">-</span>
<div class="abs" style="left:463px;top:59px;width:1.3px;height:200px;background:#131519"></div>
<div class="abs" style="left:569px;top:59px;width:1.3px;height:200px;background:#131519"></div>
<div class="abs" style="left:695px;top:59px;width:1.3px;height:200px;background:#131519"></div>
<div class="abs" style="left:835px;top:59px;width:1.3px;height:200px;background:#131519"></div>
<div class="abs" style="left:940px;top:59px;width:1.3px;height:200px;background:#131519"></div>
<div class="abs" style="left:1058.4px;top:63px;width:7.2px;height:86.5px;background:#3b3d46;border:0.8px solid #0a0b0d"></div>
</div>
</div></body>
</html>
